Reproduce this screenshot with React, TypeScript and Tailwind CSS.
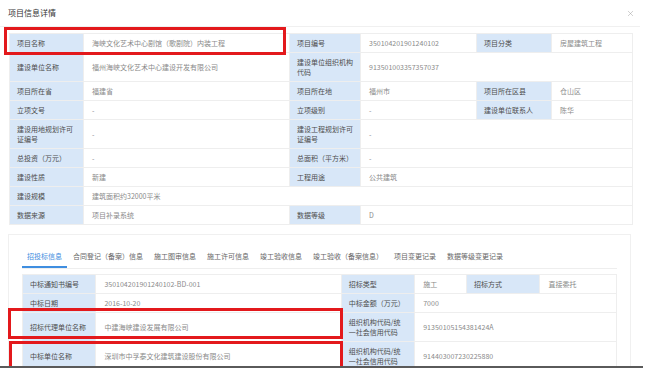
import { Fragment } from "react";
import { X } from "lucide-react";

type Cell = { label: string; value: string; span?: number };

const projectRows: Cell[][] = [
  [
    { label: "项目名称", value: "海峡文化艺术中心剧馆（歌剧院）内装工程" },
    { label: "项目编号", value: "350104201901240102" },
    { label: "项目分类", value: "房屋建筑工程" },
  ],
  [
    { label: "建设单位名称", value: "福州海峡文化艺术中心建设开发有限公司" },
    { label: "建设单位组织机构代码", value: "913501003357357037", span: 3 },
  ],
  [
    { label: "项目所在省", value: "福建省" },
    { label: "项目所在地", value: "福州市" },
    { label: "项目所在区县", value: "仓山区" },
  ],
  [
    { label: "立项文号", value: "-" },
    { label: "立项级别", value: "-" },
    { label: "建设单位联系人", value: "陈华" },
  ],
  [
    { label: "建设用地规划许可证编号", value: "-" },
    { label: "建设工程规划许可证编号", value: "-", span: 3 },
  ],
  [
    { label: "总投资（万元）", value: "-" },
    { label: "总面积（平方米）", value: "-", span: 3 },
  ],
  [
    { label: "建设性质", value: "新建" },
    { label: "工程用途", value: "公共建筑", span: 3 },
  ],
  [{ label: "建设规模", value: "建筑面积约32000平米", span: 5 }],
  [
    { label: "数据来源", value: "项目补录系统" },
    { label: "数据等级", value: "D", span: 3 },
  ],
];

const bidRows: Cell[][] = [
  [
    { label: "中标通知书编号", value: "350104201901240102-BD-001" },
    { label: "招标类型", value: "施工" },
    { label: "招标方式", value: "直接委托" },
  ],
  [
    { label: "中标日期", value: "2016-10-20" },
    { label: "中标金额（万元）", value: "7000", span: 3 },
  ],
  [
    { label: "招标代理单位名称", value: "中建海峡建设发展有限公司" },
    { label: "组织机构代码/统一社会信用代码", value: "91350105154381424A", span: 3 },
  ],
  [
    { label: "中标单位名称", value: "深圳市中孚泰文化建筑建设股份有限公司" },
    { label: "组织机构代码/统一社会信用代码", value: "914403007230225880", span: 3 },
  ],
];

const tabs = [
  "招投标信息",
  "合同登记（备案）信息",
  "施工图审信息",
  "施工许可信息",
  "竣工验收信息",
  "竣工验收（备案信息）",
  "项目变更记录",
  "数据等级变更记录",
];

const InfoTable = ({ rows, cols }: { rows: Cell[][]; cols: number[] }) => (
  <table className="table-fixed border-collapse text-[7px] leading-[10px]">
    <colgroup>
      {cols.map((w, i) => (
        <col key={i} style={{ width: w }} />
      ))}
    </colgroup>
    <tbody>
      {rows.map((row, r) => (
        <tr key={r}>
          {row.map((c) => (
            <Fragment key={c.label}>
              <td className="border border-[#eeeeee] bg-[#d8e7f8] px-[7px] py-[4px] align-middle text-[#4d4d4d]">
                {c.label}
              </td>
              <td
                colSpan={c.span ?? 1}
                className="border border-[#eeeeee] px-[8px] py-[4px] align-middle text-[#8a8a8a]"
              >
                {c.value}
              </td>
            </Fragment>
          ))}
        </tr>
      ))}
    </tbody>
  </table>
);

export default function App() {
  return (
    <div className="relative h-[368px] w-[660px] overflow-hidden bg-white font-['Noto_Sans_CJK_SC',sans-serif]">
      <div className="w-[640px]">
        <div className="flex h-[27px] items-center justify-between border-b border-[#f0f0f0] pl-[8px] pr-[5px]">
          <span className="text-[8px] text-[#333]">项目信息详情</span>
          <X size={9} strokeWidth={1.2} className="text-[#999]" />
        </div>

        <div className="pl-[9px] pt-[6px]">
          <InfoTable rows={projectRows} cols={[74, 206, 71, 116, 75, 81]} />
        </div>

        <div className="ml-[8px] mt-[9px] w-[623px] border border-[#f0f0f0] px-[13px] pt-[16px] pb-[10px]">
          <div className="flex gap-[1px] border-b border-[#eeeeee] text-[7px] leading-[10px]">
            {tabs.map((t, i) => (
              <span
                key={t}
                className={
                  i === 0
                    ? "border-b-2 border-[#3f8ee0] px-[5px] pb-[5px] text-[#3f8ee0]"
                    : "border-b-2 border-transparent px-[5px] pb-[5px] text-[#666]"
                }
              >
                {t}
              </span>
            ))}
          </div>
          <div className="mt-[5px]">
            <InfoTable rows={bidRows} cols={[74, 247, 74, 52, 74, 77]} />
          </div>
        </div>
      </div>

      {/* red annotation boxes */}
      <div className="absolute left-[4px] top-[27px] h-[28px] w-[282px] border-[3px] border-[#e3191c]" />
      <div className="absolute left-[8px] top-[308px] h-[31px] w-[335px] border-[3px] border-[#e3191c]" />
      <div className="absolute left-[9px] top-[341px] h-[40px] w-[334px] border-[3px] border-[#e3191c]" />

      <div className="absolute bottom-0 left-0 h-[2px] w-[643px] bg-[#5a5a5a]" />
    </div>
  );
}
